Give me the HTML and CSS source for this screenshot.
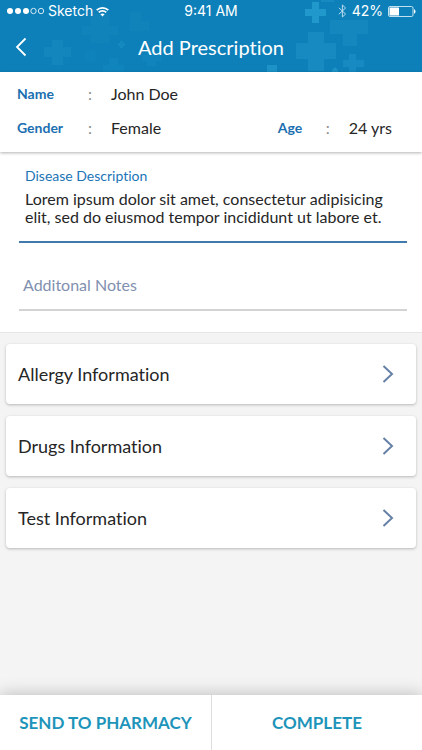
FILE: index.html
```html
<!DOCTYPE html>
<html lang="en">
<head>
<meta charset="utf-8">
<meta name="viewport" content="width=device-width, initial-scale=1">
<title>Add Prescription</title>
<link rel="stylesheet" href="styles.css">
</head>
<body>
<div class="screen">
  <header class="header">
    <svg class="pattern" viewBox="0 0 422 72" preserveAspectRatio="xMidYMid slice" aria-hidden="true">
      <g fill="#2ba3d4">
        <path opacity=".7" d="M312 2h7v7h7v7h-7v7h-7v-7h-7v-7h7z"/>
        <path opacity=".3" d="M308 32h16v11h12v16h-12v12h-16V59h-12V43h12z"/>
        <path opacity=".2" d="M341 20h27v14h-11v12h-14V34h-13V20z"/>
        <path opacity=".3" d="M349 54h7v6h8v7h-8v5h-7v-5h-6v-7h6z"/>
        <path opacity=".5" d="M267 65h10v7h-10zM332 72v-2l3-3 3 3v2z"/>
        <path opacity=".18" d="M52 40h11v7h8v10h-8v8H52v-8h-8V47h8z"/>
        <path opacity=".07" d="M91 14h18v12h9v9h-9v8H91v-8h-9v-9h9zM130 12h11v9h8v10h-19z"/>
        <path opacity=".12" d="M109 58h9v7h6v7h-21v-7h6zM147 50h9v5h6v6h-6v5h-9v-5h-5v-6h5z"/>
        <path opacity=".25" d="M120 41h3v2h2v3h-2v2h-3v-2h-2v-3h2z"/>
        <circle opacity=".08" cx="91" cy="56" r="6"/>
        <path opacity=".3" d="M321 0h13v2h-13z"/>
      </g>
    </svg>
    <div class="status">
      <div class="carrier">
        <svg width="39" height="8" viewBox="0 0 39 8" aria-hidden="true">
          <g fill="#fff"><circle cx="4" cy="4" r="3"/><circle cx="12" cy="4" r="3"/><circle cx="20" cy="4" r="3"/></g>
          <g fill="none" stroke="#fff" stroke-width=".8"><circle cx="27.500" cy="4" r="2.700"/><circle cx="35" cy="4" r="2.700"/></g>
        </svg>
        <span>Sketch</span>
        <svg width="13" height="11" viewBox="0 0 13 11" fill="none" stroke="#fff" stroke-width="1.700" aria-hidden="true">
          <path d="M.7 4.200a8.300 8.300 0 0 1 11.600 0M2.800 6.400a5.200 5.200 0 0 1 7.400 0"/>
          <path fill="#fff" stroke="none" d="M6.500 10.600 4.400 8.300a3.200 3.200 0 0 1 4.200 0z"/>
        </svg>
      </div>
      <span class="time">9:41 AM</span>
      <div class="power">
        <svg width="9" height="14" viewBox="0 0 9 14" fill="none" stroke="#b9dcee" stroke-width="1" aria-hidden="true"><path d="M.8 3.800 7.600 10 4.400 13V1l3.200 3L.8 10.200"/></svg>
        <span>42%</span>
        <svg width="28" height="11" viewBox="0 0 28 11" aria-hidden="true">
          <rect x=".5" y=".5" width="24.500" height="10" rx="1.500" fill="none" stroke="#d7ecf6" stroke-width=".9"/>
          <rect x="1.500" y="1.500" width="9.500" height="8" rx=".5" fill="#fff"/>
          <path d="M26 3.300c2 .7 2 3.700 0 4.400z" fill="#fff"/>
        </svg>
      </div>
    </div>
    <div class="nav">
      <button class="back" type="button" aria-label="Back">
        <svg width="12" height="20" viewBox="0 0 12 20" fill="none" stroke="#fff" stroke-width="1.800" aria-hidden="true"><path d="M10.500 1.500 2 10l8.500 8.500"/></svg>
      </button>
      <h1 class="title">Add Prescription</h1>
    </div>
  </header>

  <section class="patient">
    <div class="row">
      <span class="label">Name</span><span class="colon">:</span><span>John Doe</span>
    </div>
    <div class="row">
      <span class="label">Gender</span><span class="colon">:</span><span>Female</span>
      <span class="label age">Age</span><span class="colon">:</span><span>24 yrs</span>
    </div>
  </section>

  <form class="form">
    <div class="field active">
      <label class="caption" for="disease">Disease Description</label>
      <textarea id="disease" rows="2">Lorem ipsum dolor sit amet, consectetur adipisicing elit, sed do eiusmod tempor incididunt ut labore et.</textarea>
    </div>
    <div class="field">
      <input type="text" aria-label="Additonal Notes" placeholder="Additonal Notes">
    </div>
  </form>

  <main class="cards">
    <button class="card" type="button"><span>Allergy Information</span><svg width="12" height="18" viewBox="0 0 12 18" aria-hidden="true"><path d="m1.500 1 8.500 8-8.500 8"/></svg></button>
    <button class="card" type="button"><span>Drugs Information</span><svg width="12" height="18" viewBox="0 0 12 18" aria-hidden="true"><path d="m1.500 1 8.500 8-8.500 8"/></svg></button>
    <button class="card" type="button"><span>Test Information</span><svg width="12" height="18" viewBox="0 0 12 18" aria-hidden="true"><path d="m1.500 1 8.500 8-8.500 8"/></svg></button>
  </main>

  <footer class="actions">
    <button type="button">SEND TO PHARMACY</button>
    <button type="button">COMPLETE</button>
  </footer>
</div>
</body>
</html>
```
FILE: styles.css
```css
* { box-sizing: border-box; }

body {
  margin: 0;
  background: #f4f4f4;
  color: #262626;
  font: 16px/20px Lato, "Liberation Sans", sans-serif;
  font-variant-ligatures: none;
}

button, input, textarea {
  margin: 0;
  padding: 0;
  border: 0;
  background: none;
  color: inherit;
  font: inherit;
  font-variant-ligatures: none;
}

svg { display: block; flex: none; }

.screen {
  display: flex;
  flex-direction: column;
  min-height: 100vh;
}

.header {
  position: relative;
  background: #0d80b9;
  color: #fff;
}

.pattern {
  position: absolute;
  inset: 0;
  width: 100%;
  height: 100%;
}

.status {
  position: relative;
  display: grid;
  grid-template-columns: 1fr auto 1fr;
  align-items: center;
  height: 22px;
  padding: 0 6px;
  font: 14px/20px Inter, Roboto, sans-serif;
}

.carrier, .power {
  display: flex;
  align-items: center;
  gap: 3px;
}

.power { justify-content: flex-end; gap: 5px; }

.nav {
  position: relative;
  display: grid;
  grid-template-columns: 42px 1fr 42px;
  align-items: center;
  height: 50px;
}

.back {
  display: flex;
  align-items: center;
  height: 50px;
  padding-left: 15px;
}

.title {
  margin: 0;
  font-size: 20px;
  line-height: 24px;
  font-weight: 400;
  text-align: center;
}

.patient {
  position: relative;
  display: grid;
  gap: 14px;
  padding: 12px 30px 14px 17px;
  background: #fff;
  box-shadow: 0 1px 3px rgba(0, 0, 0, .3);
}

.row { display: flex; }

.label {
  width: 71px;
  color: #1b6fb0;
  font-size: 14px;
  font-weight: 700;
}

.colon { width: 23px; color: #8d8d8d; }

.age { width: 48px; margin-left: auto; }

.form {
  padding: 14px 15px 21px 19px;
  border-bottom: 1px solid #e6e6e6;
  background: #fff;
}

.field { border-bottom: 2px solid #d3d3d3; }

.field.active { border-color: #4179aa; }

.caption {
  display: block;
  padding-left: 6px;
  color: #1b75b7;
  font-size: 14px;
}

.field textarea {
  display: block;
  width: 100%;
  height: 55px;
  padding: 4px 6px;
  line-height: 18px;
  resize: none;
  overflow: hidden;
}

.field input {
  display: block;
  width: 100%;
  height: 66px;
  padding: 31px 4px 15px;
}

.field input::placeholder { color: #8190b0; opacity: 1; }

.cards {
  display: grid;
  gap: 12px;
  padding: 11px 6px;
}

.card {
  display: flex;
  align-items: center;
  justify-content: space-between;
  height: 60px;
  padding: 0 22px 0 12px;
  border-radius: 4px;
  background: #fff;
  box-shadow: 0 1px 3px rgba(0, 0, 0, .25);
  font-size: 18px;
}

.card svg {
  fill: none;
  stroke: #6780a8;
  stroke-width: 2;
}

.actions {
  display: grid;
  grid-template-columns: 1fr 1fr;
  margin-top: auto;
  background: #fff;
  box-shadow: 0 0 16px rgba(0, 0, 0, .25);
}

.actions button {
  height: 55px;
  color: #1d94ba;
  font-size: 17px;
  font-weight: 700;
}

.actions button + button { border-left: 1px solid #dedede; }
```
